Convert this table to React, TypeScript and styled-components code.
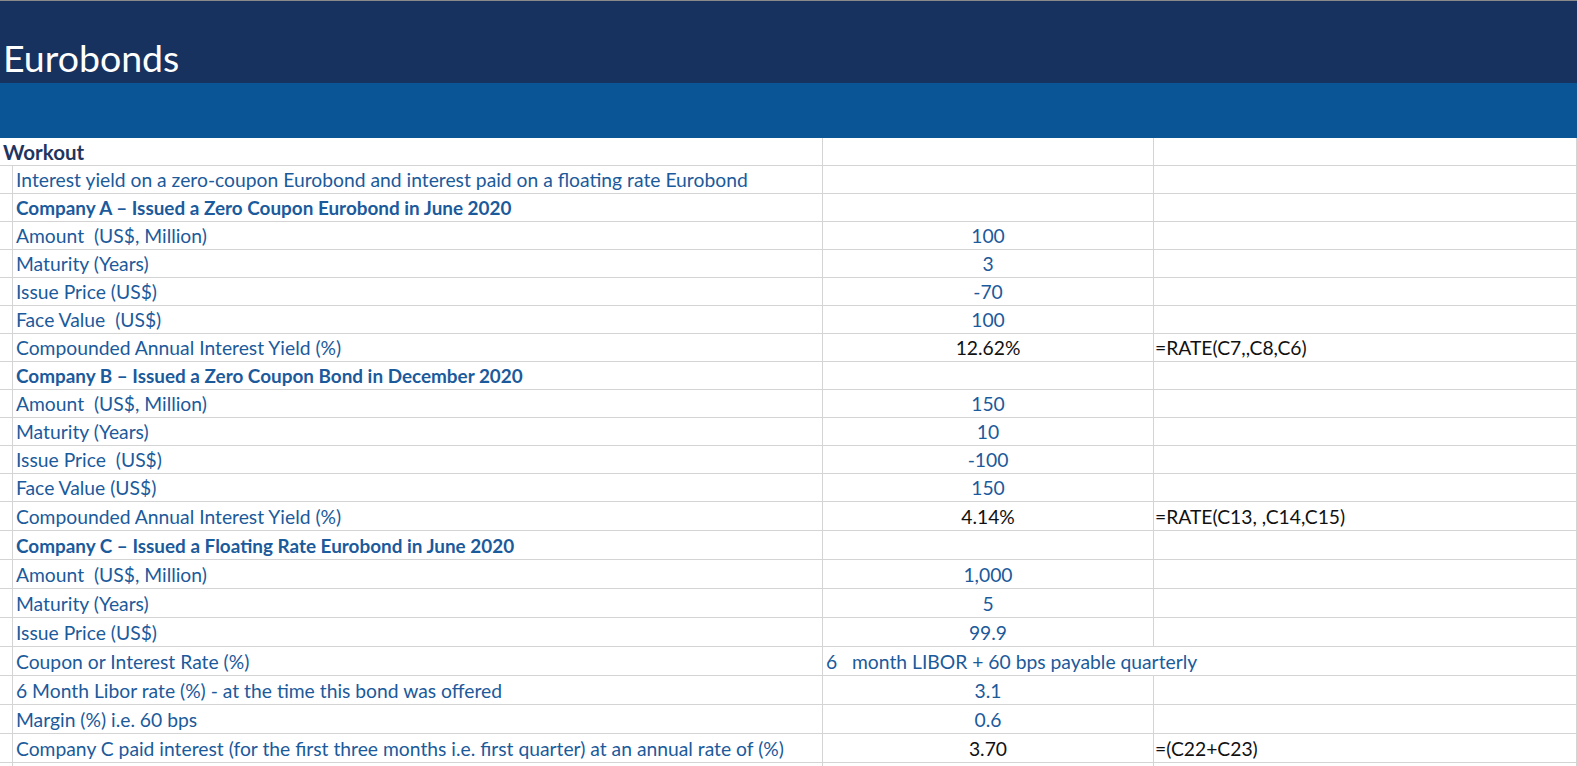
import React from "react";
import styled, { createGlobalStyle } from "styled-components";

const GlobalStyle = createGlobalStyle`
  html, body {
    margin: 0;
    padding: 0;
    background: #ffffff;
  }
  body {
    font-family: Lato, "Open Sans", sans-serif;
    overflow: hidden;
  }
`;

const Sheet = styled.div`
  width: 1577px;
  height: 766px;
  overflow: hidden;
  background: #ffffff;
`;

const TitleBand = styled.div`
  height: 82px;
  border-top: 1px solid #8a8a8a;
  background: #17325f;
  display: flex;
  align-items: flex-end;
  padding-left: 3px;
`;

const Title = styled.h1`
  margin: 0 0 3px;
  font-family: Lato, sans-serif;
  font-weight: 400;
  font-size: 37.5px;
  color: #ffffff;
  line-height: 1.2;
`;

const SubBand = styled.div`
  height: 55px;
  background: #0a5596;
`;

const Grid = styled.div`
  display: grid;
  grid-template-columns: 13px 810px 331px 1fr;
`;

type Tone = "blue" | "black" | "navy";

const toneColor: Record<Tone, string> = {
  blue: "#1b5a9b",
  black: "#111111",
  navy: "#1f3561",
};

const Cell = styled.div<{
  $h: number;
  $span?: number;
  $align?: "left" | "center";
  $tone?: Tone;
  $bold?: boolean;
  $pad?: number;
  $size?: number;
}>`
  grid-column: span ${(p) => p.$span ?? 1};
  height: ${(p) => p.$h}px;
  box-sizing: border-box;
  border-right: 1px solid #d4d4d4;
  border-bottom: 1px solid #d4d4d4;
  display: flex;
  align-items: flex-end;
  justify-content: ${(p) => (p.$align === "center" ? "center" : "flex-start")};
  padding: 0 ${(p) => p.$pad ?? 3}px 2px;
  font-size: ${(p) => p.$size ?? (p.$bold ? 18.9 : 19.3)}px;
  line-height: 22px;
  white-space: pre;
  overflow: visible;
  color: ${(p) => toneColor[p.$tone ?? "blue"]};
  font-weight: ${(p) => (p.$bold ? 700 : 400)};
`;

type Row = {
  label: string;
  bold?: boolean;
  value?: string;
  valueTone?: Tone;
  formula?: string;
  wide?: string;
};

const rows: Row[] = [
  { label: "Interest yield on a zero-coupon Eurobond and interest paid on a floating rate Eurobond" },
  { label: "Company A \u2013 Issued a Zero Coupon Eurobond in June 2020", bold: true },
  { label: "Amount  (US$, Million)", value: "100" },
  { label: "Maturity (Years)", value: "3" },
  { label: "Issue Price (US$)", value: "-70" },
  { label: "Face Value  (US$)", value: "100" },
  { label: "Compounded Annual Interest Yield (%)", value: "12.62%", valueTone: "black", formula: "=RATE(C7,,C8,C6)" },
  { label: "Company B \u2013 Issued a Zero Coupon Bond in December 2020", bold: true },
  { label: "Amount  (US$, Million)", value: "150" },
  { label: "Maturity (Years)", value: "10" },
  { label: "Issue Price  (US$)", value: "-100" },
  { label: "Face Value (US$)", value: "150" },
  { label: "Compounded Annual Interest Yield (%)", value: "4.14%", valueTone: "black", formula: "=RATE(C13, ,C14,C15)" },
  { label: "Company C \u2013 Issued a Floating Rate Eurobond in June 2020", bold: true },
  { label: "Amount  (US$, Million)", value: "1,000" },
  { label: "Maturity (Years)", value: "5" },
  { label: "Issue Price (US$)", value: "99.9" },
  { label: "Coupon or Interest Rate (%)", wide: "6   month LIBOR + 60 bps payable quarterly" },
  { label: "6 Month Libor rate (%) - at the time this bond was offered", value: "3.1" },
  { label: "Margin (%) i.e. 60 bps", value: "0.6" },
  { label: "Company C paid interest (for the first three months i.e. first quarter) at an annual rate of (%)", value: "3.70", valueTone: "black", formula: "=(C22+C23)" },
];

export default function App() {
  return (
    <Sheet>
      <GlobalStyle />
      <TitleBand>
        <Title>Eurobonds</Title>
      </TitleBand>
      <SubBand />
      <Grid>
        <Cell $h={28} $span={2} $tone="navy" $bold $pad={3} $size={20.5}>
          Workout
        </Cell>
        <Cell $h={28} />
        <Cell $h={28} />
        {rows.map((r, i) => {
          const h = i < 12 ? 28 : 29;
          return (
            <React.Fragment key={i}>
              <Cell $h={h} />
              <Cell $h={h} $bold={r.bold}>
                {r.label}
              </Cell>
              {r.wide ? (
                <Cell $h={h} $span={2}>
                  {r.wide}
                </Cell>
              ) : (
                <>
                  <Cell $h={h} $align="center" $tone={r.valueTone}>
                    {r.value}
                  </Cell>
                  <Cell $h={h} $tone="black" $pad={1}>
                    {r.formula}
                  </Cell>
                </>
              )}
            </React.Fragment>
          );
        })}
        <Cell $h={29} />
        <Cell $h={29} />
        <Cell $h={29} />
        <Cell $h={29} />
      </Grid>
    </Sheet>
  );
}
